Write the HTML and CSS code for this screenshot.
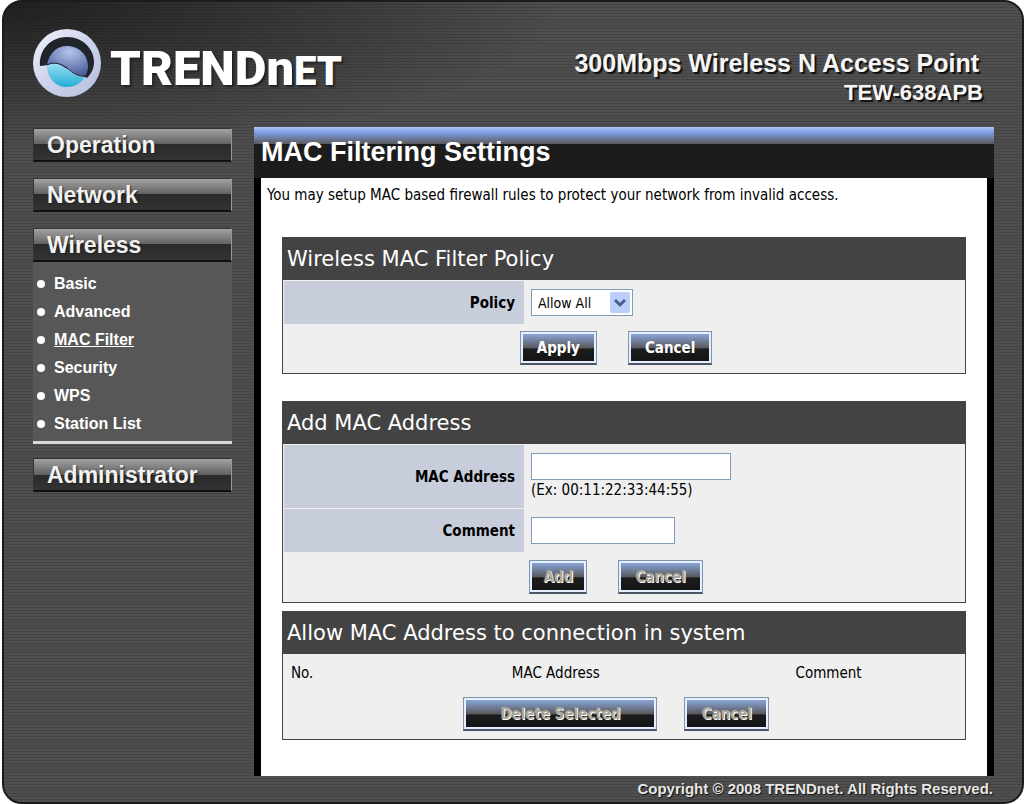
FILE: index.html
```
<!DOCTYPE html>
<html lang="en">
<head>
    <meta charset="UTF-8">
    <meta name="viewport" content="width=device-width, initial-scale=1.0">
    <title>TRENDnet | TEW-638APB | MAC Filtering Settings</title>
    <link rel="stylesheet" href="styles.css">
</head>
<body>
    <div class="frame">
        <header class="header">
            <div class="logo">
                <svg class="logo-mark" viewBox="0 0 68 68" aria-hidden="true">
                    <defs>
                        <linearGradient id="ring" x1="0" y1="0" x2="1" y2="1">
                            <stop offset="0" stop-color="#f2f4fd"/>
                            <stop offset="0.5" stop-color="#ccd2ea"/>
                            <stop offset="1" stop-color="#b4bedd"/>
                        </linearGradient>
                        <radialGradient id="sky" cx="0.55" cy="0.2" r="0.8">
                            <stop offset="0" stop-color="#b4c4ea"/>
                            <stop offset="1" stop-color="#4a5f9c"/>
                        </radialGradient>
                        <linearGradient id="sea" x1="0" y1="0" x2="0" y2="1">
                            <stop offset="0" stop-color="#9cdcf4"/>
                            <stop offset="1" stop-color="#22aed6"/>
                        </linearGradient>
                    </defs>
                    <circle cx="34" cy="34" r="34" fill="url(#ring)"/>
                    <path d="M7 37 C6 20 18 8 34 8 C50 8 61 20 61 33 C61 40 58 45 54 49 L50 47 L36 40 L15 36 Z" fill="#20242b"/>
                    <path d="M14 36 C16 24 24 17 34 17 C46 17 55 26 55 37 C55 41 54 44 52 47 C44 48 40 43 34 39 C28 35 22 32 14 36 Z" fill="url(#sky)"/>
                    <path d="M14 36 C22 32 28 35 34 40 C40 45 45 48 52 48 C48 54 42 58 34 58 C23 58 14 50 14 36 Z" fill="url(#sea)"/>
                    <path d="M14 36 C22 32 28 35 34 39 C40 44 45 48 53 47" fill="none" stroke="#20242b" stroke-width="1"/>
                </svg>
                <div class="logo-text">TREND<span class="logo-n">n</span><span class="logo-et">ET</span></div>
            </div>
            <div class="product">
                <div class="product-name">300Mbps Wireless N Access Point</div>
                <div class="product-model">TEW-638APB</div>
            </div>
        </header>

        <div class="main">
            <nav class="sidebar">
                <button type="button" class="menu-btn">Operation</button>
                <button type="button" class="menu-btn">Network</button>
                <div class="menu-group">
                    <button type="button" class="menu-btn">Wireless</button>
                    <ul class="submenu">
                        <li><a href="#">Basic</a></li>
                        <li><a href="#">Advanced</a></li>
                        <li><a href="#" class="active">MAC Filter</a></li>
                        <li><a href="#">Security</a></li>
                        <li><a href="#">WPS</a></li>
                        <li><a href="#">Station List</a></li>
                    </ul>
                </div>
                <button type="button" class="menu-btn">Administrator</button>
            </nav>

            <main class="content">
                <h1 class="page-title">MAC Filtering Settings</h1>
                <div class="page-body">
                    <p class="intro">You may setup MAC based firewall rules to protect your network from invalid access.</p>

                    <form class="box box-policy">
                        <h2 class="box-title">Wireless MAC Filter Policy</h2>
                        <div class="row">
                            <label class="row-label" for="policy">Policy</label>
                            <div class="row-field">
                                <span class="select-wrap">
                                    <select id="policy" class="select">
                                        <option>Allow All</option>
                                        <option>Allow Listed</option>
                                        <option>Deny Listed</option>
                                    </select>
                                    <svg class="select-arrow" viewBox="0 0 20 21" aria-hidden="true">
                                        <rect width="20" height="21" rx="2" fill="#bccffa"/>
                                        <path d="M5 8 L10 13 L15 8" fill="none" stroke="#46618f" stroke-width="3"/>
                                    </svg>
                                </span>
                            </div>
                        </div>
                        <div class="actions">
                            <button type="button" class="btn">Apply</button>
                            <button type="reset" class="btn">Cancel</button>
                        </div>
                    </form>

                    <form class="box">
                        <h2 class="box-title">Add MAC Address</h2>
                        <div class="row">
                            <label class="row-label" for="mac">MAC Address</label>
                            <div class="row-field">
                                <input type="text" id="mac" class="input">
                                <span class="hint">(Ex: 00:11:22:33:44:55)</span>
                            </div>
                        </div>
                        <div class="row">
                            <label class="row-label" for="comment">Comment</label>
                            <div class="row-field">
                                <input type="text" id="comment" class="input input-short">
                            </div>
                        </div>
                        <div class="actions">
                            <button type="button" class="btn btn-small" disabled>Add</button>
                            <button type="reset" class="btn" disabled>Cancel</button>
                        </div>
                    </form>

                    <form class="box">
                        <h2 class="box-title">Allow MAC Address to connection in system</h2>
                        <table class="mac-table">
                            <thead>
                                <tr>
                                    <th class="col-no">No.</th>
                                    <th>MAC Address</th>
                                    <th>Comment</th>
                                </tr>
                            </thead>
                        </table>
                        <div class="actions actions-list">
                            <button type="button" class="btn btn-wide" disabled>Delete Selected</button>
                            <button type="reset" class="btn" disabled>Cancel</button>
                        </div>
                    </form>
                </div>
            </main>
        </div>

        <footer class="footer">Copyright © 2008 TRENDnet. All Rights Reserved.</footer>
    </div>
</body>
</html>
```
FILE: styles.css
```
* {
    box-sizing: border-box;
}

body {
    margin: 0;
    background: #fff;
    color: #000;
    font-family: "DejaVu Sans Condensed", Tahoma, sans-serif;
    font-size: 15px;
}

.frame {
    display: flex;
    flex-direction: column;
    min-height: 100vh;
    margin-left: 2px;
    padding: 0 28px 0 29px;
    border: 2px solid #1c1c1c;
    border-radius: 20px;
    background:
        radial-gradient(ellipse 560px 150px at 0 0, rgba(20, 20, 20, 0.8), rgba(20, 20, 20, 0)),
        repeating-linear-gradient(#4f4f4f 0, #4f4f4f 2px, #434343 2px, #434343 3px);
}

/* Header */
.header {
    display: flex;
    justify-content: space-between;
    height: 125px;
}

.logo {
    display: flex;
    gap: 9px;
    padding-top: 27px;
}

.logo-mark {
    width: 68px;
    height: 68px;
}

.logo-text {
    color: #fff;
    font-family: Roboto, sans-serif;
    font-size: 49px;
    font-weight: 900;
    line-height: 80px;
    text-shadow: 2px 2px 2px #222;
}

.logo-et {
    font-size: 40px;
}

.product {
    padding: 46px 11px 0 0;
    color: #f6f6f6;
    font-family: "Liberation Sans", Arial, sans-serif;
    font-weight: bold;
    text-align: right;
    text-shadow: 2px 2px 1px #111;
}

.product-name {
    padding-right: 4px;
    font-size: 25px;
    line-height: 30px;
}

.product-model {
    font-size: 22px;
    line-height: 30px;
}

.main {
    display: flex;
    flex: 1;
    gap: 22px;
}

/* Sidebar */
.sidebar {
    display: flex;
    flex-direction: column;
    gap: 16px;
    width: 199px;
    padding-top: 1px;
    font-family: "Liberation Sans", Arial, sans-serif;
}

.menu-btn {
    display: block;
    width: 100%;
    height: 34px;
    padding: 0 0 0 13px;
    border: 1px solid #333;
    border-right-color: #999;
    border-bottom: 2px solid #111;
    background: linear-gradient(#a2a2a2 0, #606060 50%, #2a2a2a 50%, #333 100%);
    color: #f2f2f2;
    font-family: inherit;
    font-size: 23px;
    font-weight: bold;
    line-height: 30px;
    text-align: left;
    text-shadow: 1px 1px 1px #222;
    cursor: pointer;
}

.menu-group {
    margin-bottom: -2px;
}

.submenu {
    margin: 0;
    padding: 8px 0 3px;
    border-bottom: 3px solid #d8d8d8;
    background: #575757;
    list-style: none;
}

.submenu li {
    display: flex;
    align-items: center;
    gap: 9px;
    height: 28px;
    padding-left: 4px;
}

.submenu li::before {
    content: "";
    width: 8px;
    height: 8px;
    border-radius: 50%;
    background: #fff;
}

.submenu a {
    color: #fff;
    font-size: 16px;
    font-weight: bold;
    text-decoration: none;
}

.submenu .active {
    text-decoration: underline;
}

/* Content */
.content {
    display: flex;
    flex: 1;
    flex-direction: column;
}

.page-title {
    margin: 0;
    padding: 0 7px;
    background: linear-gradient(#a9c4f5 0, #7c9be0 6px, #5a5a5a 17px, #1c1c1c 17px);
    color: #fff;
    font-family: "Liberation Sans", Arial, sans-serif;
    font-size: 27px;
    line-height: 51px;
}

.page-body {
    flex: 1;
    padding: 7px 21px 0;
    border: solid #000;
    border-width: 0 7px;
    background: #fff;
}

.intro {
    margin: 0 -15px 32px;
    line-height: 20px;
}

.box {
    margin-bottom: 8px;
    border: 1px solid #444;
    background: #efefef;
}

.box-policy {
    margin-bottom: 27px;
}

.box-title {
    margin: 0 0 1px;
    padding: 0 4px;
    background: #434343;
    color: #fff;
    font-family: "DejaVu Sans", Verdana, sans-serif;
    font-size: 21px;
    font-weight: normal;
    line-height: 42px;
}

.row {
    display: grid;
    grid-template-columns: 240px 1fr;
    margin: 0 1px 1px;
}

.row-label {
    display: flex;
    align-items: center;
    justify-content: flex-end;
    padding-right: 9px;
    background: #c7cddb;
    font-weight: bold;
}

.row-field {
    display: flex;
    flex-direction: column;
    align-items: flex-start;
    padding: 8px 7px;
}

.row-field .hint {
    line-height: 20px;
}

.input,
.select {
    height: 27px;
    border: 1px solid #7f9db9;
    background: #fff;
    font: inherit;
}

.input {
    width: 200px;
    padding: 0 4px;
}

.input-short {
    width: 144px;
}

.select-wrap {
    position: relative;
}

.select {
    display: block;
    width: 102px;
    padding: 0 24px 0 6px;
    border-radius: 0;
    font-size: 14px;
    appearance: none;
}

.select-arrow {
    position: absolute;
    top: 3px;
    right: 3px;
    width: 20px;
    height: 21px;
    pointer-events: none;
}

.actions {
    display: flex;
    justify-content: center;
    gap: 31px;
    padding: 7px 16px 8px 0;
}

.actions-list {
    gap: 27px;
}

.box-policy .actions {
    padding-top: 6px;
}

.btn {
    height: 34px;
    padding: 0 16px;
    border: 1px solid #7f93ad;
    border-bottom: 2px solid #4a5566;
    background: linear-gradient(#8fb0ea 0, #5b5b60 50%, #1c1c1c 55%, #141414 100%);
    box-shadow: inset 0 0 0 2px #e4efff;
    color: #fff;
    font: inherit;
    font-weight: bold;
    cursor: pointer;
}

.btn:disabled {
    color: #aca899;
    text-shadow: 1px 1px 0 #fff;
    cursor: default;
}

.btn-small {
    padding: 0 13px;
}

.btn-wide {
    padding: 0 36px;
}

.mac-table {
    width: 100%;
    border-collapse: collapse;
    table-layout: fixed;
}

.mac-table th {
    width: 40%;
    height: 35px;
    padding: 0 8px;
    font-weight: normal;
}

.mac-table .col-no {
    width: 20%;
    text-align: left;
}

.footer {
    padding-right: 1px;
    color: #e6e6e6;
    font-family: "Liberation Sans", Arial, sans-serif;
    font-size: 15px;
    font-weight: bold;
    line-height: 26px;
    text-align: right;
    text-shadow: 1px 1px 1px #111;
}
```
